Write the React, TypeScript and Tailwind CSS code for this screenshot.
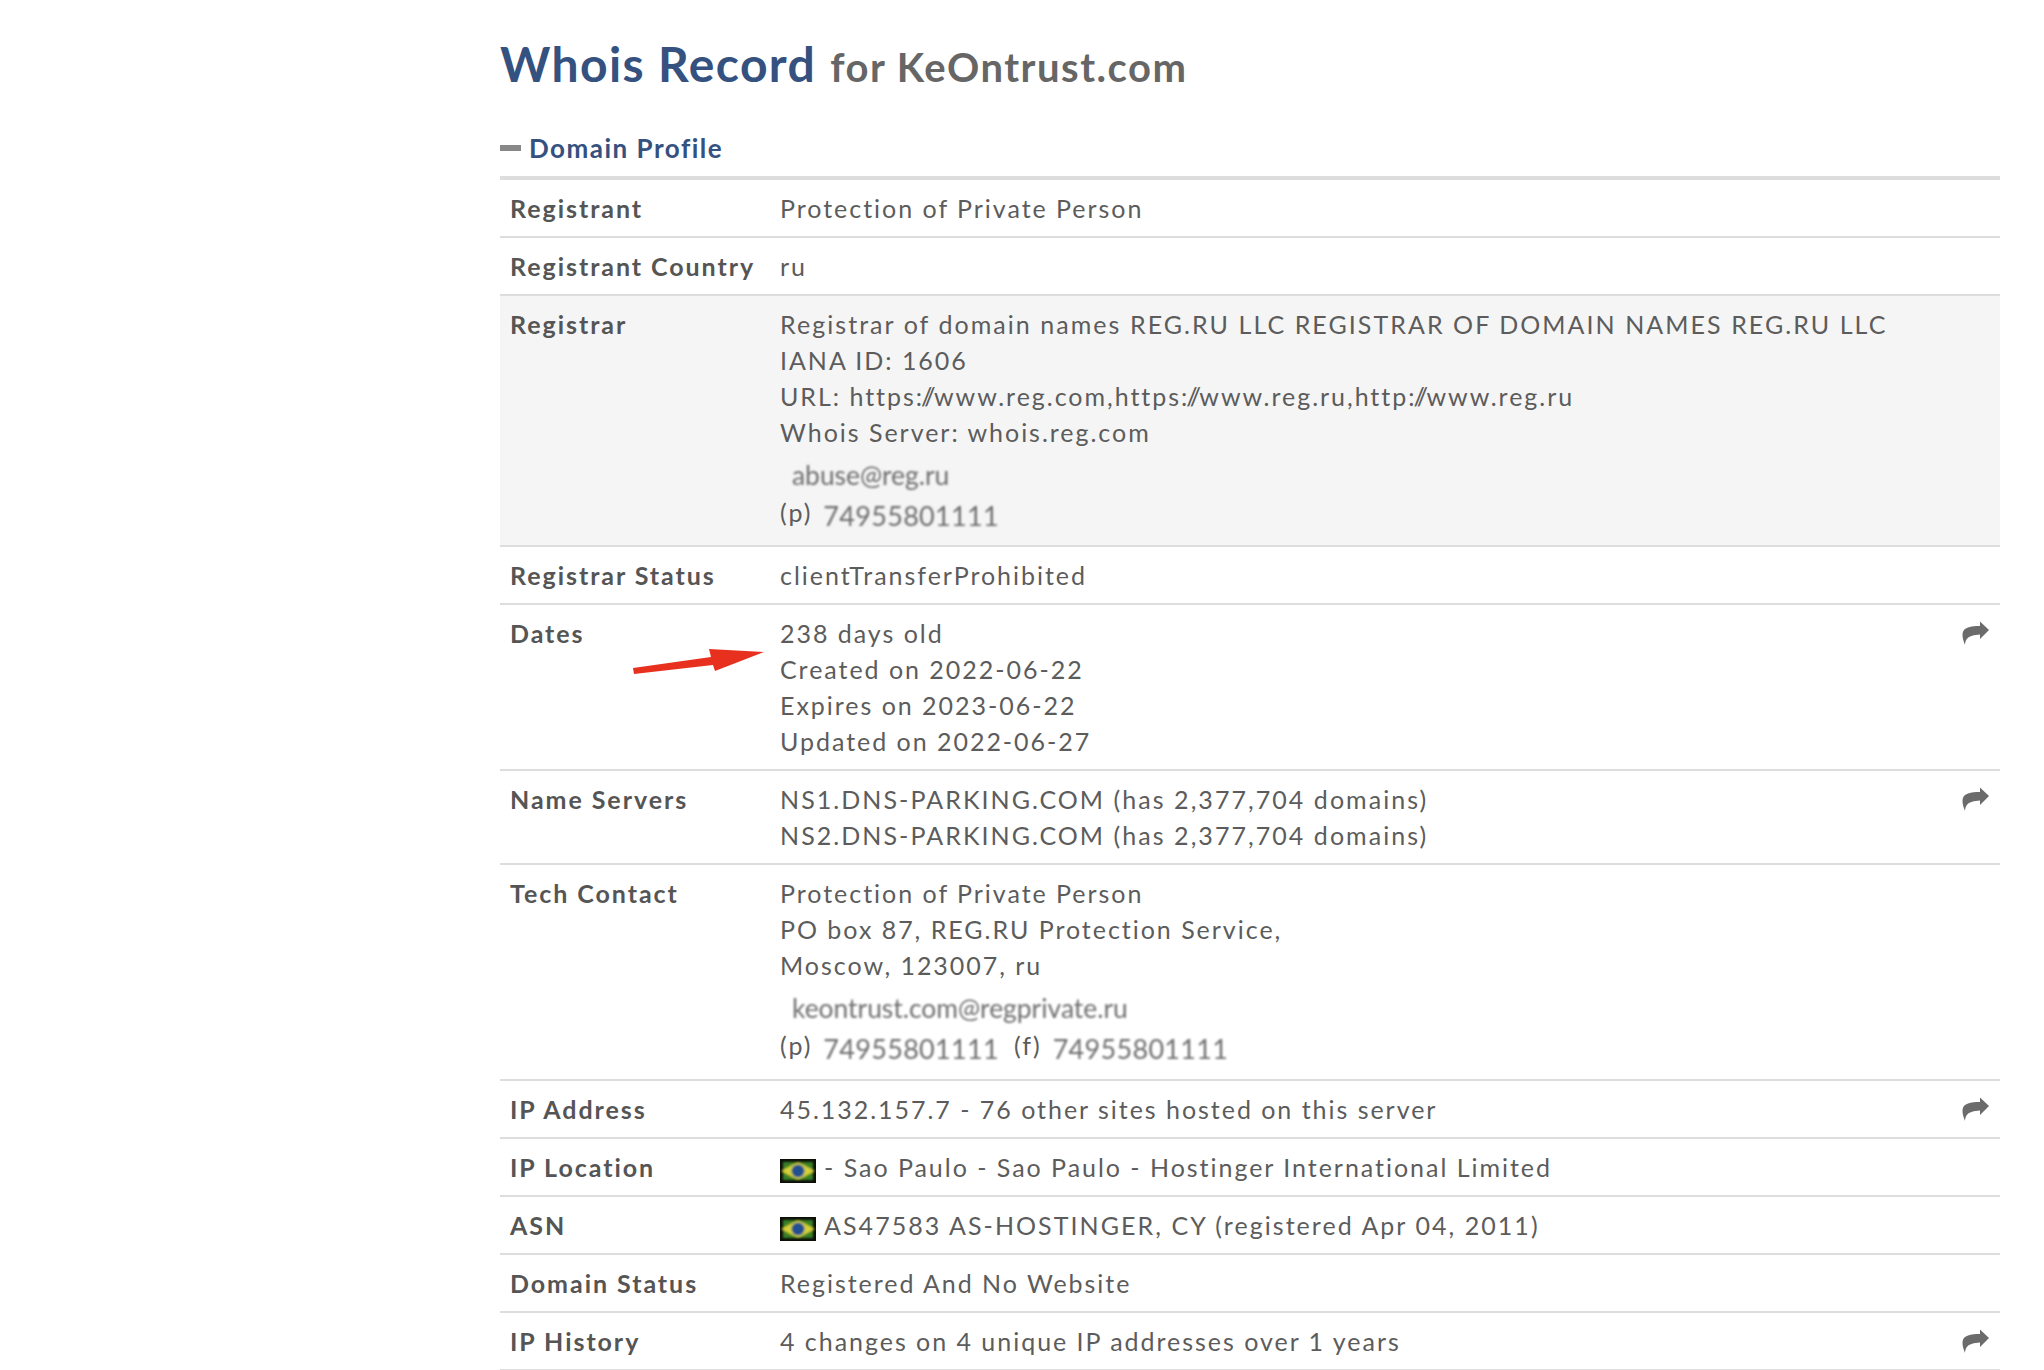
import type { ReactNode } from "react";

function ShareIcon() {
  return (
    <svg viewBox="0 0 27 24" className="absolute right-[11px] top-[16px] h-[24px] w-[27px] fill-[#6b6b6b]">
      <path d="M27 9 L18 0.5 L18 5 C9 5 1 6 0.5 13 C0.3 17 1.5 20 3 24 C3.5 19 5 14 18 13.5 L18 18 Z" />
    </svg>
  );
}

function Flag() {
  return (
    <svg viewBox="0 0 36 24" className="mr-[8px] inline-block h-[24px] w-[36px] align-[-6px]">
      <defs>
        <filter id="soft">
          <feGaussianBlur stdDeviation="1.3" />
        </filter>
      </defs>
      <rect width="36" height="24" fill="#0b0f08" />
      <g filter="url(#soft)">
        <rect x="3" y="3" width="30" height="18" fill="#3a8028" />
        <path d="M18 3 L35 12 L18 21 L1 12 Z" fill="#d6d038" />
        <circle cx="18" cy="12" r="6.5" fill="#24508f" />
      </g>
    </svg>
  );
}

function Email({ children }: { children: ReactNode }) {
  return (
    <div className="flex h-[43px] items-end pl-[12px]">
      <span className="text-[26.4px] tracking-normal text-[#6e6e6e] blur-[0.9px]">{children}</span>
    </div>
  );
}

function Phone({ children }: { children: ReactNode }) {
  return (
    <span className="relative top-[4px] ml-[11px] text-[27px] tracking-[0.3px] text-[#6e6e6e] blur-[0.9px]">{children}</span>
  );
}

function Row({
  label,
  children,
  shaded,
  share,
}: {
  label: string;
  children: ReactNode;
  shaded?: boolean;
  share?: boolean;
}) {
  return (
    <div className={`relative flex border-b-2 border-[#ddd] py-[10px] ${shaded ? "bg-[#f5f5f5]" : ""}`}>
      <div className="w-[280px] shrink-0 pl-[10px] font-bold text-[#555]">{label}</div>
      <div className="flex-1 tracking-[1.97px] text-[#5c5c5c]">{children}</div>
      {share && <ShareIcon />}
    </div>
  );
}

// colon and slashes run together in the original
function Scheme() {
  return (
    <>
      <span className="tracking-[-1px]">:</span>
      <span className="tracking-[-8px]">/</span>
      <span className="tracking-[-1.7px]">/</span>
    </>
  );
}

export default function App() {
  return (
    <div className="h-[1370px] overflow-hidden bg-white font-['Lato',sans-serif]">
      <div className="ml-[500px] w-[1500px]">
        <h1 className="flex h-[88px] items-end font-bold leading-none">
          <span className="text-[48px] tracking-[1.4px] text-[#34517f]">Whois Record</span>
          <span className="ml-[14px] pb-[1px] text-[40px] tracking-[1.5px] text-[#666]">for KeOntrust.com</span>
        </h1>
        <div className="mt-[38px] flex h-[54px] items-start border-b-4 border-[#ddd]">
          <div className="mt-[19px] h-[6px] w-[21px] bg-[#888]" />
          <div className="ml-[8px] mt-[3px] text-[26px] font-bold tracking-[1.5px] text-[#34517f]">Domain Profile</div>
        </div>
        <div className="text-[25px] leading-[36px] tracking-[1.95px]">
          <Row label="Registrant">Protection of Private Person</Row>
          <Row label="Registrant Country">ru</Row>
          <Row label="Registrar" shaded>
            <div className="tracking-[2.05px]">Registrar of domain names REG.RU LLC REGISTRAR OF DOMAIN NAMES REG.RU LLC</div>
            <div>IANA ID: 1606</div>
            <div>URL: https<Scheme />www.reg.com,https<Scheme />www.reg.ru,http<Scheme />www.reg.ru</div>
            <div>Whois Server: whois.reg.com</div>
            <Email>abuse@reg.ru</Email>
            <div className="h-[42px] pt-[1px]">
              (p)<Phone>74955801111</Phone>
            </div>
          </Row>
          <Row label="Registrar Status">clientTransferProhibited</Row>
          <Row label="Dates" share>
            <div>238 days old</div>
            <div>Created on 2022-06-22</div>
            <div>Expires on 2023-06-22</div>
            <div>Updated on 2022-06-27</div>
            <svg viewBox="0 0 134 26" className="absolute left-[131px] top-[42px] h-[28px] w-[134px] fill-[#e8301f]">
              <path d="M2 20 L80 9 L78 1 L133 4 L84 23 L82 17 L3 26 Z" />
            </svg>
          </Row>
          <Row label="Name Servers" share>
            <div className="tracking-[2.05px]">NS1.DNS-PARKING.COM (has 2,377,704 domains)</div>
            <div className="tracking-[2.05px]">NS2.DNS-PARKING.COM (has 2,377,704 domains)</div>
          </Row>
          <Row label="Tech Contact">
            <div>Protection of Private Person</div>
            <div>PO box 87, REG.RU Protection Service,</div>
            <div>Moscow, 123007, ru</div>
            <Email>keontrust.com@regprivate.ru</Email>
            <div className="h-[43px] pt-[1px]">
              (p)<Phone>74955801111</Phone>
              <span className="ml-[15px]">(f)</span><Phone>74955801111</Phone>
            </div>
          </Row>
          <Row label="IP Address" share>45.132.157.7 - 76 other sites hosted on this server</Row>
          <Row label="IP Location"><Flag />- Sao Paulo - Sao Paulo - Hostinger International Limited</Row>
          <Row label="ASN"><Flag /><span className="tracking-[2.05px]">AS47583 AS-HOSTINGER, CY (registered Apr 04, 2011)</span></Row>
          <Row label="Domain Status">Registered And No Website</Row>
          <Row label="IP History" share>4 changes on 4 unique IP addresses over 1 years</Row>
        </div>
      </div>
    </div>
  );
}
